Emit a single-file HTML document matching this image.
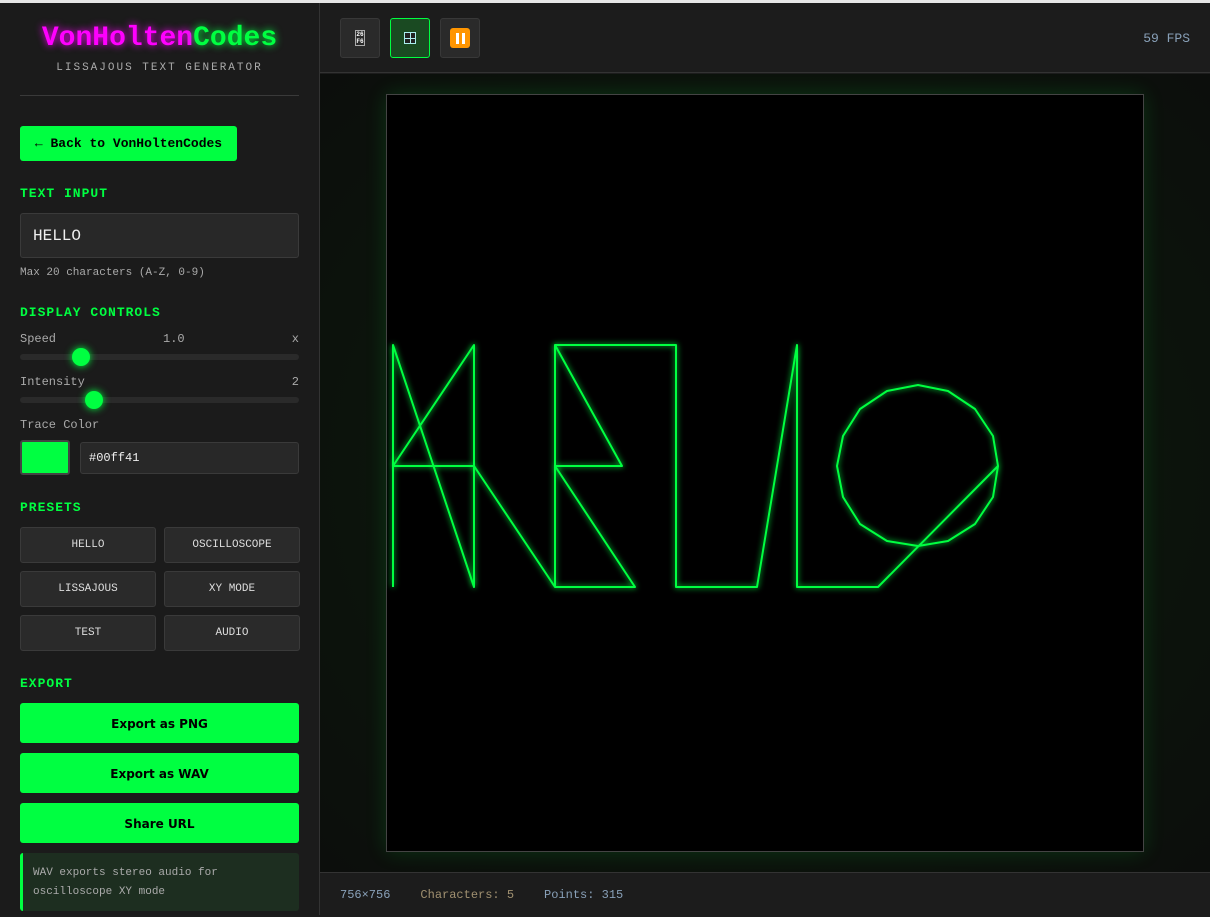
<!DOCTYPE html>
<html><head><meta charset="utf-8"><style>
*{box-sizing:border-box;margin:0;padding:0}
body{width:1210px;height:915px;overflow:hidden;background:#1c1c1c;font-family:"Liberation Mono",monospace;position:relative}
.top{position:absolute;left:0;top:0;width:1210px;height:3px;background:#e6e6e6}
.side{position:absolute;left:0;top:3px;width:320px;height:912px;background:#1b1b1b;border-right:1px solid #333}
.logo{position:absolute;top:20px;left:0;width:319px;text-align:center;font-size:28px;font-weight:bold}
.sub{position:absolute;top:59px;left:0;width:319px;text-align:center;font-size:11px;letter-spacing:2px;color:#aaa}
.hr{position:absolute;left:20px;top:92px;width:279px;height:1px;background:#3a3a3a}
.back{position:absolute;left:20px;top:123px;width:217px;height:35px;background:#00ff41;border-radius:3px;color:#000;font-weight:bold;font-size:13px;line-height:35px;text-align:center}
.h{position:absolute;left:20px;color:#00ff41;font-weight:bold;font-size:13px;letter-spacing:1px}
.inp{position:absolute;left:20px;top:210px;width:279px;height:45px;background:#282828;border:1px solid #3a3a3a;border-radius:3px;color:#eee;font-size:16px;line-height:44px;padding-left:12px}
.small{position:absolute;left:20px;font-size:11px;color:#aaa}
.lbl{position:absolute;left:20px;width:279px;font-size:12px;color:#aaa}
.track{position:absolute;left:20px;width:279px;height:6px;background:#2a2a2a;border-radius:3px}
.thumb{position:absolute;width:18px;height:18px;border-radius:50%;background:#00ff41;box-shadow:0 0 8px #00ff41}
.pb{position:absolute;width:136px;height:36px;background:#2a2a2a;border:1px solid #3a3a3a;border-radius:3px;color:#ddd;font-size:11px;text-align:center;line-height:35px}
.eb{position:absolute;left:20px;width:279px;height:40px;background:#00ff41;border-radius:3px;color:#000;font-family:"DejaVu Sans",sans-serif;font-weight:bold;font-size:12px;text-align:center;line-height:42px}
.note{position:absolute;left:20px;top:850px;width:279px;height:58px;background:#1d2e20;border-left:3px solid #00ff41;border-radius:3px;color:#aaa;font-size:11px;line-height:19px;padding:11px 0 0 10px}
.hdr{position:absolute;left:320px;top:3px;width:890px;height:70px;background:#1c1c1c;border-bottom:1px solid #333}
.tb{position:absolute;top:15px;width:40px;height:40px;border-radius:3px;background:#2a2a2a;border:1px solid #383838;display:flex;align-items:center;justify-content:center}
.stage{position:absolute;left:320px;top:74px;width:890px;height:798px;background:radial-gradient(ellipse at center,#0f220f 0%,#0c140c 60%,#0c0e0c 100%)}
.canvas{position:absolute;left:66px;top:20px;width:758px;height:758px;background:#000;border:1px solid #444;box-shadow:0 0 20px rgba(0,255,65,0.15)}
.foot{position:absolute;left:320px;top:872px;width:890px;height:43px;background:#1c1c1c;border-top:1px solid #333;font-size:12px;color:#88a0b8;line-height:44px;padding-left:20px}
.foot span{margin-right:30px}
</style></head><body>
<div class="top"></div>
<div class="side">
<div class="logo"><span style="color:#ff00ff;text-shadow:0 0 8px #ff00ff">VonHolten</span><span style="color:#00ff41;text-shadow:0 0 8px #00ff41">Codes</span></div>
<div class="sub">LISSAJOUS TEXT GENERATOR</div>
<div class="hr"></div>
<div class="back">← Back to VonHoltenCodes</div>
<div class="h" style="top:183px">TEXT INPUT</div>
<div class="inp">HELLO</div>
<div class="small" style="top:264px">Max 20 characters (A-Z, 0-9)</div>
<div class="h" style="top:302px">DISPLAY CONTROLS</div>
<div class="lbl" style="top:329px">Speed<span style="position:absolute;left:143px">1.0</span><span style="position:absolute;right:0">x</span></div>
<div class="track" style="top:351px"></div><div class="thumb" style="left:72px;top:345px"></div>
<div class="lbl" style="top:372px">Intensity<span style="position:absolute;right:0">2</span></div>
<div class="track" style="top:394px"></div><div class="thumb" style="left:85px;top:388px"></div>
<div class="lbl" style="top:415px">Trace Color</div>
<div style="position:absolute;left:20px;top:437px;width:50px;height:35px;background:#00ff41;border:2px solid #444;border-radius:3px"></div>
<div style="position:absolute;left:80px;top:439px;width:219px;height:32px;background:#282828;border:1px solid #3a3a3a;border-radius:3px;color:#eee;font-size:12px;line-height:30px;padding-left:8px">#00ff41</div>
<div class="h" style="top:497px">PRESETS</div>
<div class="pb" style="left:20px;top:524px">HELLO</div><div class="pb" style="left:164px;top:524px">OSCILLOSCOPE</div>
<div class="pb" style="left:20px;top:568px">LISSAJOUS</div><div class="pb" style="left:164px;top:568px">XY MODE</div>
<div class="pb" style="left:20px;top:612px">TEST</div><div class="pb" style="left:164px;top:612px">AUDIO</div>
<div class="h" style="top:673px">EXPORT</div>
<div class="eb" style="top:700px">Export as PNG</div>
<div class="eb" style="top:750px">Export as WAV</div>
<div class="eb" style="top:800px">Share URL</div>
<div class="note">WAV exports stereo audio for<br>oscilloscope XY mode</div>
</div>
<div class="hdr">
<div class="tb" style="left:20px"><div style="width:10px;height:16px;border:1px solid #aaa;color:#fff;font-size:6px;line-height:7px;text-align:center;font-weight:bold">26<br>F6</div></div>
<div class="tb" style="left:70px;background:#1a4a22;border-color:#00ff41"><div style="width:12px;height:12px;border:1px solid #aee;background:linear-gradient(#aee,#aee) center/1px 100% no-repeat,linear-gradient(#aee,#aee) center/100% 1px no-repeat,#222"></div></div>
<div class="tb" style="left:120px"><div style="width:20px;height:20px;background:#ff9500;border-radius:3px;display:flex;justify-content:center;align-items:center;gap:3px"><i style="width:3px;height:11px;background:#fff"></i><i style="width:3px;height:11px;background:#fff"></i></div></div>
<div style="position:absolute;right:20px;top:28px;font-size:13px;color:#88a0b8">59 FPS</div>
</div>
<div class="stage"><div class="canvas"></div></div>
<svg style="position:absolute;left:0;top:0" width="1210" height="915"><g fill="none" stroke="#00ff41" stroke-width="2" stroke-linejoin="round" style="filter:drop-shadow(0 0 3px #00ff41)">
<path d="M393 587V345L474 587V345L393 466H474L555 587H635L555 466H622L555 345V587M555 345H676V587H757L797 345V587H878L998 466"/>
<polygon points="918,385 948,391 975,409 993,436 998,466 993,497 975,524 948,541 918,546 887,541 860,524 843,497 837,466 843,436 860,409 887,391"/>
</g></svg>
<div class="foot"><span>756×756</span><span style="color:#a09070">Characters: 5</span><span>Points: 315</span></div>
</body></html>
